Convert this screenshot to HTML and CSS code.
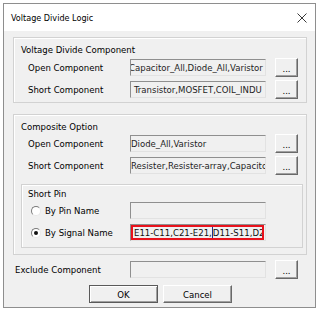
FILE: index.html
```html
<!DOCTYPE html>
<html lang="en">
<head>
    <meta charset="UTF-8">
    <title>Voltage Divide Logic</title>
    <link rel="stylesheet" href="styles.css">
</head>
<body>
    <div class="window">
        <div class="titlebar">
            <span class="title">Voltage Divide Logic</span>
            <svg class="close" width="10" height="10" viewBox="0 0 10 10">
                <path d="M0.5 0.5L9.5 9.5M9.5 0.5L0.5 9.5" stroke="#3a3a3a" stroke-width="1"/>
            </svg>
        </div>

        <div class="dialog">
            <div class="group g1">
                <div class="legend">Voltage Divide Component</div>
                <div class="row">
                    <span class="label">Open Component</span>
                    <div class="field"><span class="scrolled">Capacitor_All,Diode_All,Varistor</span></div>
                    <button class="browse">...</button>
                </div>
                <div class="row">
                    <span class="label">Short Component</span>
                    <div class="field pad">Transistor,MOSFET,COIL_INDU</div>
                    <button class="browse">...</button>
                </div>
            </div>

            <div class="group g2">
                <div class="legend">Composite Option</div>
                <div class="row">
                    <span class="label">Open Component</span>
                    <div class="field">Diode_All,Varistor</div>
                    <button class="browse">...</button>
                </div>
                <div class="row">
                    <span class="label">Short Component</span>
                    <div class="field">Resister,Resister-array,Capacito</div>
                    <button class="browse">...</button>
                </div>

                <div class="group sub">
                    <div class="legend">Short Pin</div>
                    <div class="row radio-row">
                        <span class="label"><span class="radio"></span>By Pin Name</span>
                        <div class="field"></div>
                    </div>
                    <div class="row radio-row">
                        <span class="label"><span class="radio checked"></span>By Signal Name</span>
                        <div class="field">
                            <span class="mark">E11-C11,C21-E21,<span class="caret"></span>D11-S11,D2</span>
                        </div>
                    </div>
                </div>
            </div>

            <div class="row exclude">
                <span class="label">Exclude Component</span>
                <div class="field"></div>
                <button class="browse">...</button>
            </div>

            <div class="actions">
                <button class="btn default">OK</button>
                <button class="btn">Cancel</button>
            </div>
        </div>
    </div>
</body>
</html>
```

FILE: styles.css
```css
* {
    box-sizing: border-box;
}
body {
    margin: 0;
    background: #fff;
    font-family: "DejaVu Sans Condensed", "Liberation Sans", sans-serif;
    font-size: 9.5px;
    color: #000;
}
.window {
    margin: 3px 0 0 3px;
    width: 313px;
    height: 305px;
    border: 1px solid #8e8e8e;
    background: #f0f0f0;
}
.titlebar {
    height: 27px;
    background: #fff;
    display: flex;
    align-items: center;
    justify-content: space-between;
    padding: 0 8px 0 7px;
}
.title {
    font-size: 9px;
}
.dialog {
    padding: 6px 8px 0 9px;
}
.group {
    border: 1px solid #d2d2d2;
    box-shadow: inset 1px 1px #fff;
}
.legend {
    height: 13px;
    line-height: 13px;
}
.g1 {
    height: 66px;
    padding: 5px 7px 0;
}
.g1 .legend {
    margin-bottom: 2px;
}
.g2 {
    margin-top: 11px;
    padding: 5px 5px 6px 7px;
}
.g2 > .legend {
    margin-bottom: 1px;
}
.row {
    display: flex;
    align-items: center;
    height: 19px;
    padding-left: 7px;
}
.row + .row {
    margin-top: 3px;
}
.label {
    width: 102px;
    display: flex;
    align-items: center;
    white-space: nowrap;
}
.field {
    width: 136px;
    height: 17px;
    border: 1px solid;
    border-color: #8f8f8f #e2e2e2 #e2e2e2 #8f8f8f;
    background: #f0f0f0;
    color: #1e1e1e;
    line-height: 15px;
    white-space: nowrap;
    overflow: hidden;
}
.field.pad {
    padding-left: 3px;
}
.scrolled {
    display: inline-block;
    margin-left: -2px;
}
.browse {
    margin-left: 9px;
    width: 23px;
    height: 19px;
    padding: 3px 0 0;
    font: inherit;
    color: #000;
    background: #f0f0f0;
    border: 1px solid;
    border-color: #fff #696969 #696969 #fff;
    box-shadow: inset -1px -1px #a0a0a0;
    line-height: 12px;
}
.sub {
    margin-top: 9px;
    margin-right: -2px;
    padding: 2px 0 5px 6px;
}
.sub > .legend {
    margin-bottom: 1px;
}
.radio-row {
    padding-left: 3px;
}
.radio-row .label {
    width: 99px;
}
.radio {
    position: relative;
    width: 10px;
    height: 10px;
    margin-right: 4px;
    border-radius: 50%;
    border: 1px solid;
    border-color: #7a7a7a #e8e8e8 #e8e8e8 #7a7a7a;
    background: #fff;
}
.radio.checked::after {
    content: "";
    position: absolute;
    left: 2px;
    top: 2px;
    width: 4px;
    height: 4px;
    border-radius: 50%;
    background: #111;
}
.mark {
    display: block;
    width: 133px;
    height: 15px;
    border: 2px solid #e8121c;
    padding-left: 1px;
    line-height: 11px;
    color: #111;
    overflow: hidden;
}
.caret {
    display: inline-block;
    width: 0;
    height: 11px;
    border-left: 1px solid #1c2f8c;
    vertical-align: -2px;
}
.exclude {
    margin-top: 5px;
    padding-left: 2px;
}
.exclude .label {
    width: 115px;
}
.actions {
    display: flex;
    gap: 5px;
    margin: 6px 0 0 76px;
}
.btn {
    width: 69px;
    height: 18px;
    padding: 0;
    font: inherit;
    color: #000;
    background: #f0f0f0;
    border: 1px solid;
    border-color: #fff #696969 #696969 #fff;
    box-shadow: inset -1px -1px #a0a0a0;
}
.btn.default {
    border-color: #5a5a5a;
    box-shadow: inset 1px 1px #fff, inset -1px -1px #a0a0a0;
}
```
